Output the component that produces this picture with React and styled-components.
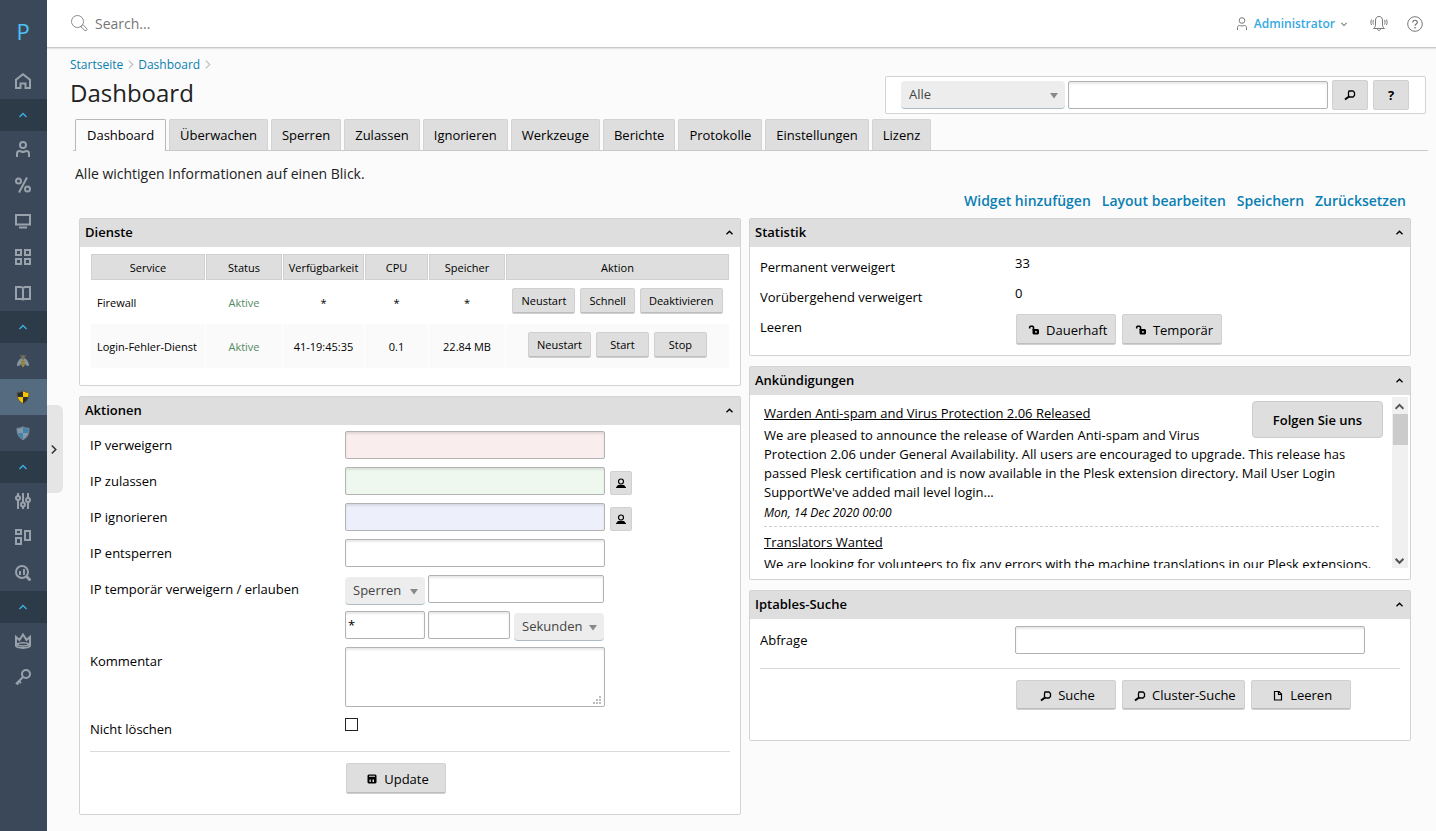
import React from "react";
import styled, { createGlobalStyle, css } from "styled-components";

const GlobalStyle = createGlobalStyle`
  *, *::before, *::after { box-sizing: border-box; }
  body {
    margin: 0;
    background: #fbfbfb;
    color: #000;
    font-family: "Open Sans", "Liberation Sans", sans-serif;
    font-size: 13px;
    line-height: 19px;
  }
  button, input, select, textarea { font: inherit; color: inherit; margin: 0; }
  button { cursor: pointer; }
`;

const line = "#d3d3d3";
const fill = "#dedede";

/* ---------- page frame ---------- */

const Page = styled.div`
  display: flex;
  min-height: 100vh;
`;

const Sidebar = styled.nav`
  flex: 0 0 47px;
  display: flex;
  flex-direction: column;
  background: #3a4859;
  position: relative;
`;

const Logo = styled.a`
  height: 63px;
  line-height: 63px;
  padding-right: 1px;
  text-align: center;
  font-size: 22px;
  color: #4cc2f3;
  text-decoration: none;
`;

const NavItem = styled.a`
  height: 36px;
  padding-right: 1px;
  display: flex;
  align-items: center;
  justify-content: center;
  color: #99a2aa;
  background: ${(p) => (p.$active ? "#546b80" : "transparent")};
`;

const NavToggle = styled.button`
  height: 32px;
  padding: 0 1px 0 0;
  border: 0;
  display: flex;
  align-items: center;
  justify-content: center;
  background: #2d3a47;
  color: #3bb3e6;
`;

const Drawer = styled.button`
  position: absolute;
  left: 47px;
  top: 405px;
  width: 16px;
  height: 88px;
  padding: 0 3px 0 0;
  border: 0;
  border-radius: 0 6px 6px 0;
  background: #e5e5e5;
  color: #333;
  display: flex;
  align-items: center;
  justify-content: center;
`;

const Main = styled.div`
  flex: 1;
  min-width: 0;
`;

const TopBar = styled.header`
  height: 48px;
  display: flex;
  align-items: center;
  padding: 0 13px 0 24px;
  background: #fff;
  border-bottom: 1px solid #cacaca;
  box-shadow: 0 1px 1px #e6e6e6;
  color: #777;
`;

const SearchLabel = styled.label`
  flex: 1;
  display: flex;
  align-items: center;
  gap: 7px;
`;

const SearchInput = styled.input`
  width: 240px;
  height: 28px;
  padding: 0;
  border: 0;
  outline: 0;
  background: transparent;
  font-size: 14px;
  &::placeholder { color: #757575; opacity: 1; }
`;

const UserButton = styled.button`
  display: flex;
  align-items: center;
  gap: 6px;
  padding: 0;
  border: 0;
  background: none;
  color: #777;
  font-size: 12px;
  font-weight: 600;
  span { color: #35a9df; }
`;

const IconButton = styled.button`
  display: flex;
  padding: 0;
  margin-left: ${(p) => p.$gap}px;
  border: 0;
  background: none;
  color: #777;
`;

/* ---------- heading area ---------- */

const Content = styled.main`
  padding: 7px 8px 16px 23px;
`;

const Crumbs = styled.div`
  display: flex;
  align-items: center;
  gap: 3px;
  height: 18px;
  font-size: 12px;
  color: #bdbdbd;
  a { color: #0a7fae; text-decoration: none; }
`;

const HeadRow = styled.div`
  display: flex;
  justify-content: space-between;
  align-items: flex-start;
  padding-right: 2px;
`;

const Title = styled.h1`
  margin: 2px 0 0;
  font-size: 24px;
  line-height: 36px;
  font-weight: 400;
  color: #222;
`;

const FindBar = styled.form`
  display: flex;
  align-items: center;
  gap: 3px;
  width: 541px;
  height: 38px;
  margin-top: 3px;
  padding: 0 15px;
  border: 1px solid ${line};
  border-radius: 2px;
  background: #fff;
`;

const FindButtons = styled.div`
  display: flex;
  gap: 5px;
  margin-left: 1px;
`;

const SquareButton = styled.button`
  width: ${(p) => p.$w}px;
  height: ${(p) => p.$h}px;
  padding: 0;
  border: 1px solid #d0d0d0;
  border-radius: 2px;
  background: ${fill};
  font-weight: 700;
  display: flex;
  align-items: center;
  justify-content: center;
`;

const Tabs = styled.div`
  display: flex;
  gap: 3px;
  height: 32px;
  margin: 5px 0 0 3px;
  padding-left: 2px;
  border-bottom: 1px solid #c8c8c8;
`;

const Tab = styled.a`
  height: ${(p) => (p.$active ? 32 : 31)}px;
  padding: 0 ${(p) => (p.$active ? 11 : 10)}px;
  line-height: 31px;
  border: 1px solid ${(p) => (p.$active ? "#b8b8b8" : line)};
  border-bottom: 0;
  border-radius: 2px 2px 0 0;
  background: ${(p) => (p.$active ? "#fbfbfb" : fill)};
  color: #000;
  text-decoration: none;
  white-space: nowrap;
`;

const Lead = styled.p`
  margin: 13px 0 0 5px;
  font-size: 14px;
  line-height: 20px;
  color: #222;
`;

const Links = styled.div`
  display: flex;
  justify-content: flex-end;
  gap: 11px;
  margin: 7px 22px 0 0;
  font-size: 14px;
  line-height: 20px;
  font-weight: 600;
  a { color: #0a7fb3; text-decoration: none; }
`;

/* ---------- panels ---------- */

const Columns = styled.div`
  display: grid;
  grid-template-columns: minmax(0, 1fr) minmax(0, 1fr);
  gap: 8px;
  align-items: start;
  margin: 7px 17px 0 9px;
`;

const Column = styled.div`
  display: flex;
  flex-direction: column;
  gap: 10px;
`;

const PanelBox = styled.section`
  border: 1px solid ${line};
  border-radius: 2px;
  background: #fff;
`;

const PanelHead = styled.header`
  display: flex;
  align-items: center;
  justify-content: space-between;
  height: 28px;
  padding: 0 7px 2px 5px;
  background: ${fill};
  h2 { margin: 0; font-size: 13px; font-weight: 600; }
  button { display: flex; padding: 0; border: 0; background: none; }
`;

const PanelBody = styled.div`
  padding: ${(p) => p.$pad};
`;

const Rule = styled.hr`
  height: 1px;
  margin: ${(p) => p.$m};
  border: 0;
  background: #dadada;
`;

/* ---------- service table ---------- */

const Table = styled.table`
  width: 100%;
  table-layout: fixed;
  border-collapse: separate;
  border-spacing: 1px 0;
  font-size: 11px;
  text-align: center;
  th {
    height: 26px;
    padding: 0;
    border: 1px solid #d0d0d0;
    background: ${fill};
    font-weight: 400;
    white-space: nowrap;
  }
  td { height: 44px; padding: 0; white-space: nowrap; }
  td:first-child { text-align: left; padding-left: 6px; }
  tbody tr:nth-child(even) td { background: #fafafa; }
`;

const Col = styled.col`
  width: ${(p) => (p.$w ? `${p.$w}px` : "auto")};
`;

const StatusCell = styled.td`
  color: #568a63;
`;

const Actions = styled.div`
  display: flex;
  justify-content: center;
  gap: 5px;
  padding-bottom: 3px;
`;

const raised = css`
  border: 1px solid #d0d0d0;
  border-radius: 2px;
  box-shadow: inset 0 -1px 0 #bdbdbd;
  background: ${fill};
`;

const SmallButton = styled.button`
  ${raised}
  min-width: 53px;
  height: 26px;
  padding: 0 8px;
  line-height: 24px;
`;

const Button = styled.button`
  ${raised}
  min-width: 100px;
  height: ${(p) => p.$h || 31}px;
  padding: 1px 8px 0 11px;
  display: flex;
  align-items: center;
  justify-content: center;
  gap: 6px;
  white-space: nowrap;
`;

/* ---------- forms ---------- */

const FormRow = styled.div`
  display: grid;
  grid-template-columns: 255px minmax(0, 1fr);
  align-items: start;
  margin-bottom: 8px;
`;

const FieldLabel = styled.label`
  line-height: 28px;
`;

const Fields = styled.div`
  display: flex;
  flex-wrap: wrap;
  gap: 5px;
  align-items: flex-end;
`;

const Lines = styled.div`
  display: flex;
  flex-direction: column;
  gap: 8px;
`;

const TempLine = styled.div`
  display: flex;
  gap: 3px;
  height: 28px;
`;

const boxed = css`
  border: 1px solid #b3b3b3;
  border-radius: 2px;
  box-shadow: inset 0 2px 2px rgba(0, 0, 0, 0.09);
`;

const TextInput = styled.input`
  ${boxed}
  flex: none;
  width: ${(p) => p.$w}px;
  height: 28px;
  padding: 0 2px;
  background: ${(p) => p.$tint || "#fff"};
`;

const TextArea = styled.textarea`
  ${boxed}
  display: block;
  width: 260px;
  height: 60px;
  resize: none;
`;

const AreaWrap = styled.div`
  position: relative;
  width: 260px;
  svg { position: absolute; right: 4px; bottom: 3px; }
`;

const Check = styled.input`
  appearance: none;
  width: 13px;
  height: 13px;
  margin: 3px 0 0;
  border: 1px solid #222;
  background: #fff;
`;

const SelectWrap = styled.div`
  position: relative;
  flex: none;
  width: ${(p) => p.$w}px;
  height: 28px;
  margin-top: ${(p) => p.$drop || 0}px;
  margin-left: ${(p) => p.$ml || 0}px;
  select {
    appearance: none;
    width: 100%;
    height: 28px;
    padding: 0 0 0 8px;
    border: 0;
    border-bottom: 1px solid #aebcc6;
    border-radius: 4px;
    background: #ededed;
    color: #444;
  }
  svg { position: absolute; right: 7px; top: 12px; pointer-events: none; }
`;

const StatRow = styled.div`
  display: grid;
  grid-template-columns: 255px minmax(0, 1fr);
  height: 30px;
  line-height: 30px;
`;

const StatValue = styled.span`
  line-height: 22px;
`;

const ButtonRow = styled.div`
  display: flex;
  gap: ${(p) => p.$gap || 6}px;
  margin: ${(p) => p.$m || 0};
`;

/* ---------- announcements ---------- */

const NewsFrame = styled.div`
  display: flex;
  height: 171px;
  margin: 2px 2px 11px 14px;
`;

const NewsScroll = styled.div`
  flex: 1;
  overflow: hidden;
  padding: 4px 9px 0 0;
`;

const FollowButton = styled.button`
  float: right;
  width: 131px;
  height: 37px;
  padding: 2px 0 0;
  border: 1px solid #cbcbcb;
  border-radius: 4px;
  background: ${fill};
  font-weight: 600;
`;

const NewsItem = styled.article`
  padding-top: 3px;
  a { color: #000; }
  p { margin: 3px 0 0; }
  time { display: block; margin-top: 1px; font-size: 12px; font-style: italic; }
`;

const NewsRule = styled.hr`
  clear: both;
  margin: 4px 4px 3px 0;
  border: 0;
  border-top: 1px dashed #cdcdcd;
`;

const ScrollTrack = styled.div`
  width: 16px;
  display: flex;
  flex-direction: column;
  align-items: center;
  justify-content: space-between;
  background: #f0f0f0;
`;

const ScrollGroup = styled.div`
  display: flex;
  flex-direction: column;
  align-items: center;
  span { width: 15px; height: 31px; background: #cbcbcb; }
`;

const ScrollArrow = styled.button`
  width: 16px;
  height: 17px;
  padding: 2px 1px 0 0;
  border: 0;
  background: none;
  color: #555;
  display: flex;
  align-items: center;
  justify-content: center;
`;

/* ---------- icons ---------- */

const Svg = ({ s = 16, w = 2, children }) => (
  <svg width={s} height={s} viewBox={`0 0 ${s} ${s}`} fill="none" stroke="currentColor" strokeWidth={w} aria-hidden="true">
    {children}
  </svg>
);

const Chevron = ({ dir = "up", s = 8, w = 1 }) => {
  const d = {
    up: "M0.5 6 4 2.5 7.5 6",
    down: "M0.5 2.5 4 6 7.5 2.5",
    right: "M2.5 0.5 6 4 2.5 7.5",
  }[dir];
  return (
    <svg width={s} height={s} viewBox="0 0 8 8" fill="none" stroke="currentColor" strokeWidth={w} aria-hidden="true">
      <path d={d} />
    </svg>
  );
};

const icons = {
  home: <Svg><path d="M1 15V6.8L8 1.2l7 5.6V15h-4.5v-4.5h-5V15z" /></Svg>,
  user: <Svg><circle cx="8" cy="4" r="3" /><path d="M2 16v-3.5C2 10.700 3 10 4.500 10c1.500 0 2 1 3.500 1s2-1 3.500-1S14 10.700 14 12.500V16" /></Svg>,
  percent: <Svg><circle cx="3.500" cy="4" r="2.500" /><circle cx="12.500" cy="12" r="2.500" /><path d="M12 .5 4 15.500" /></Svg>,
  screen: <Svg><path d="M1 2h14v9.500H1zM4 14.500h8" /></Svg>,
  grid: <Svg><path d="M1 1h5v5H1zM10 1h5v5h-5zM1 10h5v5H1zM10 10h5v5h-5z" /></Svg>,
  book: <Svg><path d="M1 2h5l2 1 2-1h5v12h-5l-2 .5L6 14H1zM8 3v11" /></Svg>,
  sliders: <Svg><path d="M3 0v3M3 7v9M8 0v9M8 13v3M13 0v5M13 9v7" /><circle cx="3" cy="5" r="2" /><circle cx="8" cy="11.500" r="2" /><circle cx="13" cy="7" r="2" /></Svg>,
  blocks: <Svg><path d="M1 1h5v4H1zM1 9h5v6H1zM10 2h5v9h-5z" /></Svg>,
  stats: <Svg><circle cx="7" cy="7" r="6" /><path d="M5 6v4M9 4v6" /><path d="m11.500 11.500 4 4" strokeWidth="3" /></Svg>,
  crown: <Svg><path d="M1 4 4.500 7 8 1.500 11.500 7 15 4V13c-2 2.500-12 2.500-14 0z" /><path d="M2 11.500c2-2.200 10-2.200 12 0-2 2-10 2-12 0" strokeWidth="1.500" /></Svg>,
  key: <Svg><circle cx="11" cy="5" r="4" /><path d="M8 8 1 15M4 12l2 2M2 14l1.500 1.500" /></Svg>,
};

const BeeIcon = () => (
  <svg width="14" height="14" viewBox="0 0 14 14" aria-hidden="true">
    <path d="M6 4C3 5 1 8 1 12c3 0 5-2 5.500-6zM8 4c3 1 5 4 5 8-3 0-5-2-5.500-6z" fill="#8496a3" />
    <path d="M5 2.500 4 1M9 2.500 10 1" stroke="#766c52" />
    <circle cx="7" cy="3" r="2" fill="#746f5c" />
    <path d="M7 5c-2 1-2.500 4-1.500 6.500L7 13.500l1.500-2C9.500 9 9 6 7 5z" fill="#a08c3e" />
    <path d="M5.500 7.500h3M5.500 10h3" stroke="#81733f" />
  </svg>
);

const ShieldIcon = ({ light, dark, edge }) => (
  <svg width="14" height="14" viewBox="0 0 14 14" aria-hidden="true">
    <path d="M7 1v6H1.500L1 2.500C3.500 2.500 5 2 7 1z" fill={dark} />
    <path d="M7 1c2 1 3.500 1.500 6 1.500L12.500 7H7z" fill={light} />
    <path d="M1.500 7H7v6.500C4 12 2 10 1.500 7z" fill={light} />
    <path d="M12.500 7H7v6.500c3-1.500 5-3.500 5.500-6.500z" fill={dark} />
    <path d="M7 .8c2 1 3.500 1.500 6 1.500C13 8 11.500 11.500 7 13.600 2.500 11.500 1 8 1 2.300 3.500 2.300 5 1.800 7 .8z" fill="none" stroke={edge} />
  </svg>
);

const TopSearchIcon = () => (
  <svg width="17" height="17" viewBox="0 0 17 17" fill="none" stroke="#8a8a8a" aria-hidden="true">
    <circle cx="6.500" cy="6.500" r="6" />
    <path d="m11 10 1-.5 4 4.500c.5 1-1 2.200-2 1.500L10 12l.5-1z" />
  </svg>
);

const SmallUserIcon = () => (
  <svg width="12" height="14" viewBox="0 0 12 14" fill="none" stroke="currentColor" aria-hidden="true">
    <circle cx="6" cy="3.500" r="2.800" />
    <path d="M1.500 13v-2.500c0-1.500 1-2 2-2 1 0 1.500.5 2.500.5s1.500-.5 2.500-.5 2 .5 2 2V13" />
  </svg>
);

const BellIcon = () => (
  <svg width="18" height="16" viewBox="0 0 18 16" fill="none" stroke="currentColor" aria-hidden="true">
    <path d="M3.500 12.500h11c-1.500-1-2-2-2-4.500V5c0-3-1-4.500-3.500-4.500S5.500 2 5.500 5v3c0 2.500-.5 3.500-2 4.500zM7.500 13c0 2 3 2 3 0" />
    <path d="M3.500 4c-.7 1.500-.7 3 0 4.500M1.500 3.500c-.8 2-.8 3.500 0 5.500M14.500 4c.7 1.500.7 3 0 4.500M16.500 3.500c.8 2 .8 3.500 0 5.500" />
  </svg>
);

const HelpIcon = () => (
  <svg width="16" height="16" viewBox="0 0 16 16" fill="none" stroke="currentColor" aria-hidden="true">
    <circle cx="8" cy="8" r="7.300" />
    <path d="M5.800 6.500c0-3 4.500-3 4.500 0C10.300 8 8 8 8 9.800" strokeWidth="1.200" />
    <path d="M8 11v1.500" strokeWidth="1.400" />
  </svg>
);

const LensIcon = () => (
  <svg width="12" height="12" viewBox="0 0 12 12" fill="none" stroke="#000" aria-hidden="true">
    <path d="M5 2h4l1.500 1.500v3L9 8H5.500L4.500 6.500v-3z" strokeWidth="1.300" />
    <path d="M5 7.500 1 10.500" strokeWidth="2" />
  </svg>
);

const LockIcon = () => (
  <svg width="12" height="12" viewBox="0 0 12 12" aria-hidden="true">
    <path d="M1.700 4.500V3l.8-.8h2l1 1V6" fill="none" stroke="#000" strokeWidth="1.600" />
    <path fillRule="evenodd" d="M4.500 5h5.500l1 1v3.500l-1 1H5.500l-1-1zM7.200 7v1.700h1.500V7z" fill="#000" />
  </svg>
);

const DiskIcon = () => (
  <svg width="12" height="12" viewBox="0 0 12 12" aria-hidden="true">
    <path fillRule="evenodd" d="M2.500 1.500h7l1 1v7l-1 1h-7l-1-1v-7zM3 2.700v1h6v-1zM3.500 6.500V9h1.300V6.500zM6.500 6.500V9H8V6.500z" fill="#000" />
  </svg>
);

const PageIcon = () => (
  <svg width="12" height="12" viewBox="0 0 12 12" fill="none" stroke="#000" strokeWidth="1.200" aria-hidden="true">
    <path d="M2.500 1.500H7L9.500 4v6h-7zM6.500 1.500v3h3" />
  </svg>
);

const PersonIcon = () => (
  <svg width="12" height="12" viewBox="0 0 12 12" aria-hidden="true">
    <circle cx="6" cy="4.500" r="2.500" fill="none" stroke="#000" strokeWidth="1.200" />
    <path d="M3 8h6l2 2.500v.5H1v-.5z" fill="#000" />
  </svg>
);

const Grip = () => (
  <svg width="8" height="8" viewBox="0 0 8 8" fill="#bdbdbd" aria-hidden="true">
    <path d="M0 6h2v2H0zM3 6h2v2H3zM6 6h2v2H6zM3 3h2v2H3zM6 3h2v2H6zM6 0h2v2H6z" />
  </svg>
);

/* ---------- composed parts ---------- */

const Select = ({ value, label, ...rest }) => (
  <SelectWrap {...rest}>
    <select aria-label={label} defaultValue={value}>
      <option>{value}</option>
    </select>
    <svg width="8" height="6" viewBox="0 0 8 6" aria-hidden="true"><path d="M0 0h8L4 5.500z" fill="#888" /></svg>
  </SelectWrap>
);

const Panel = ({ title, children }) => (
  <PanelBox>
    <PanelHead>
      <h2>{title}</h2>
      <button aria-label={`${title} einklappen`}><Chevron w={1.7} s={7} /></button>
    </PanelHead>
    {children}
  </PanelBox>
);

const NavLink = ({ name, icon, active }) => (
  <NavItem href="#" aria-label={name} $active={active}>{icon || icons[name]}</NavItem>
);

const Toggle = () => <NavToggle aria-label="Gruppe"><Chevron s={8} w={1.3} /></NavToggle>;

const tabs = ["Dashboard", "Überwachen", "Sperren", "Zulassen", "Ignorieren", "Werkzeuge", "Berichte", "Protokolle", "Einstellungen", "Lizenz"];

const services = [
  { name: "Firewall", up: "*", cpu: "*", mem: "*", actions: ["Neustart", "Schnell", "Deaktivieren"] },
  { name: "Login-Fehler-Dienst", up: "41-19:45:35", cpu: "0.1", mem: "22.84 MB", actions: ["Neustart", "Start", "Stop"] },
];

const ipRows = [
  { id: "deny", label: "IP verweigern", tint: "#f9eded" },
  { id: "allow", label: "IP zulassen", tint: "#eef8ee", me: true },
  { id: "ignore", label: "IP ignorieren", tint: "#edeffa", me: true },
  { id: "unblock", label: "IP entsperren" },
];

export default function App() {
  return (
    <Page>
      <GlobalStyle />
      <Sidebar>
        <Logo href="#">P</Logo>
        <NavLink name="home" />
        <Toggle />
        <NavLink name="user" />
        <NavLink name="percent" />
        <NavLink name="screen" />
        <NavLink name="grid" />
        <NavLink name="book" />
        <Toggle />
        <NavLink name="warden" icon={<BeeIcon />} />
        <NavLink name="firewall" active icon={<ShieldIcon light="#f5c400" dark="#2c2c2c" edge="#5c5a50" />} />
        <NavLink name="shield" icon={<ShieldIcon light="#3f84ad" dark="#8798a4" edge="#7d8f9c" />} />
        <Toggle />
        <NavLink name="sliders" />
        <NavLink name="blocks" />
        <NavLink name="stats" />
        <Toggle />
        <NavLink name="crown" />
        <NavLink name="key" />
        <Drawer aria-label="Menü öffnen"><Chevron dir="right" s={9} w={1.4} /></Drawer>
      </Sidebar>

      <Main>
        <TopBar>
          <SearchLabel>
            <TopSearchIcon />
            <SearchInput placeholder="Search..." aria-label="Search" />
          </SearchLabel>
          <UserButton>
            <SmallUserIcon />
            <span>Administrator</span>
            <Chevron dir="down" s={6} w={1.4} />
          </UserButton>
          <IconButton $gap={23} aria-label="Benachrichtigungen"><BellIcon /></IconButton>
          <IconButton $gap={19} aria-label="Hilfe"><HelpIcon /></IconButton>
        </TopBar>

        <Content>
          <Crumbs>
            <a href="#">Startseite</a>
            <Chevron dir="right" s={9} />
            <a href="#">Dashboard</a>
            <Chevron dir="right" s={9} />
          </Crumbs>
          <HeadRow>
            <Title>Dashboard</Title>
            <FindBar onSubmit={(e) => e.preventDefault()}>
              <Select value="Alle" label="Bereich" $w={164} />
              <TextInput $w={260} aria-label="Suchbegriff" />
              <FindButtons>
                <SquareButton $w={36} $h={30} aria-label="Suchen"><LensIcon /></SquareButton>
                <SquareButton $w={36} $h={30}>?</SquareButton>
              </FindButtons>
            </FindBar>
          </HeadRow>
          <Tabs>
            {tabs.map((t, i) => (
              <Tab key={t} href="#" $active={i === 0}>{t}</Tab>
            ))}
          </Tabs>
          <Lead>Alle wichtigen Informationen auf einen Blick.</Lead>
          <Links>
            <a href="#">Widget hinzufügen</a>
            <a href="#">Layout bearbeiten</a>
            <a href="#">Speichern</a>
            <a href="#">Zurücksetzen</a>
          </Links>

          <Columns>
            <Column>
              <Panel title="Dienste">
                <PanelBody $pad="7px 10px 17px">
                  <Table>
                    <colgroup>
                      <Col $w={114} />
                      <Col $w={76} />
                      <Col $w={81} />
                      <Col $w={63} />
                      <Col $w={76} />
                      <Col />
                    </colgroup>
                    <thead>
                      <tr>
                        <th>Service</th><th>Status</th><th>Verfügbarkeit</th><th>CPU</th><th>Speicher</th><th>Aktion</th>
                      </tr>
                    </thead>
                    <tbody>
                      {services.map((s) => (
                        <tr key={s.name}>
                          <td>{s.name}</td>
                          <StatusCell>Aktive</StatusCell>
                          <td>{s.up}</td>
                          <td>{s.cpu}</td>
                          <td>{s.mem}</td>
                          <td>
                            <Actions>
                              {s.actions.map((a) => <SmallButton key={a}>{a}</SmallButton>)}
                            </Actions>
                          </td>
                        </tr>
                      ))}
                    </tbody>
                  </Table>
                </PanelBody>
              </Panel>

              <Panel title="Aktionen">
                <PanelBody $pad="6px 10px 20px">
                  {ipRows.map((r) => (
                    <FormRow key={r.id}>
                      <FieldLabel htmlFor={r.id}>{r.label}</FieldLabel>
                      <Fields>
                        <TextInput id={r.id} $w={260} $tint={r.tint} />
                        {r.me && <SquareButton $w={22} $h={24} aria-label="Meine IP"><PersonIcon /></SquareButton>}
                      </Fields>
                    </FormRow>
                  ))}
                  <FormRow>
                    <FieldLabel htmlFor="temp">IP temporär verweigern / erlauben</FieldLabel>
                    <Lines>
                      <TempLine>
                        <Select value="Sperren" label="Aktion" $w={80} $drop={2} />
                        <TextInput id="temp" $w={176} />
                      </TempLine>
                      <TempLine>
                        <TextInput $w={80} defaultValue="*" aria-label="Ports" />
                        <TextInput $w={82} aria-label="Dauer" />
                        <Select value="Sekunden" label="Einheit" $w={90} $drop={2} $ml={1} />
                      </TempLine>
                    </Lines>
                  </FormRow>
                  <FormRow>
                    <FieldLabel htmlFor="comment">Kommentar</FieldLabel>
                    <AreaWrap><TextArea id="comment" /><Grip /></AreaWrap>
                  </FormRow>
                  <FormRow>
                    <FieldLabel htmlFor="keep">Nicht löschen</FieldLabel>
                    <Check type="checkbox" id="keep" />
                  </FormRow>
                  <Rule $m="0 0 11px" />
                  <ButtonRow $m="0 0 0 256px"><Button><DiskIcon />Update</Button></ButtonRow>
                </PanelBody>
              </Panel>
            </Column>

            <Column>
              <Panel title="Statistik">
                <PanelBody $pad="5px 10px 13px">
                  <StatRow><span>Permanent verweigert</span><StatValue>33</StatValue></StatRow>
                  <StatRow><span>Vorübergehend verweigert</span><StatValue>0</StatValue></StatRow>
                  <StatRow>
                    <span>Leeren</span>
                    <ButtonRow $m="2px 0 0 1px">
                      <Button><LockIcon />Dauerhaft</Button>
                      <Button><LockIcon />Temporär</Button>
                    </ButtonRow>
                  </StatRow>
                </PanelBody>
              </Panel>

              <Panel title="Ankündigungen">
                <NewsFrame>
                  <NewsScroll>
                    <FollowButton>Folgen Sie uns</FollowButton>
                    <NewsItem>
                      <a href="#">Warden Anti-spam and Virus Protection 2.06 Released</a>
                      <p>
                        We are pleased to announce the release of Warden Anti-spam and Virus Protection 2.06 under General
                        Availability. All users are encouraged to upgrade. This release has passed Plesk certification and is
                        now available in the Plesk extension directory. Mail User Login SupportWe've added mail level login...
                      </p>
                      <time>Mon, 14 Dec 2020 00:00</time>
                    </NewsItem>
                    <NewsRule />
                    <NewsItem>
                      <a href="#">Translators Wanted</a>
                      <p>We are looking for volunteers to fix any errors with the machine translations in our Plesk extensions.</p>
                    </NewsItem>
                  </NewsScroll>
                  <ScrollTrack>
                    <ScrollGroup>
                      <ScrollArrow aria-label="Nach oben"><Chevron s={9} w={1.8} /></ScrollArrow>
                      <span />
                    </ScrollGroup>
                    <ScrollArrow aria-label="Nach unten"><Chevron dir="down" s={9} w={1.8} /></ScrollArrow>
                  </ScrollTrack>
                </NewsFrame>
              </Panel>

              <Panel title="Iptables-Suche">
                <PanelBody $pad="7px 10px 30px">
                  <FormRow>
                    <FieldLabel htmlFor="query">Abfrage</FieldLabel>
                    <TextInput id="query" $w={350} />
                  </FormRow>
                  <Rule $m="14px 0 11px" />
                  <ButtonRow $m="0 0 0 256px">
                    <Button $h={30}><LensIcon />Suche</Button>
                    <Button $h={30}><LensIcon />Cluster-Suche</Button>
                    <Button $h={30}><PageIcon />Leeren</Button>
                  </ButtonRow>
                </PanelBody>
              </Panel>
            </Column>
          </Columns>
        </Content>
      </Main>
    </Page>
  );
}
